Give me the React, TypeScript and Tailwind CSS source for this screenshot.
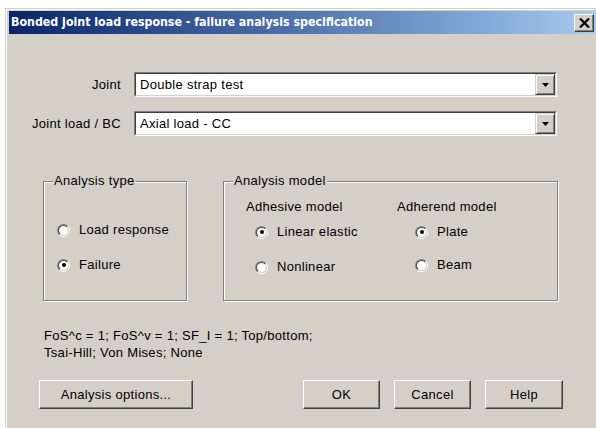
import React from 'react';

const FACE = 'bg-[#d4d0c8]';

// classic sunken radio circle
const Radio: React.FC<{ checked?: boolean }> = ({ checked }) => (
  <span className="relative inline-block w-[13px] h-[13px] rounded-full border border-t-[#808080] border-l-[#808080] border-b-white border-r-white shrink-0">
    <span className="absolute inset-0 rounded-full border border-t-[#404040] border-l-[#404040] border-b-[#d4d0c8] border-r-[#d4d0c8] bg-white flex items-center justify-center">
      {checked && <span className="w-[4px] h-[4px] rounded-full bg-black" />}
    </span>
  </span>
);

const RadioRow: React.FC<{ label: string; checked?: boolean }> = ({ label, checked }) => (
  <div className="flex items-center h-[16px] gap-[9px] -ml-[1px]">
    <Radio checked={checked} />
    <span>{label}</span>
  </div>
);

const Combo: React.FC<{ value: string }> = ({ value }) => (
  <div className="w-[423px] h-[25px] border border-t-[#808080] border-l-[#808080] border-b-white border-r-white">
    <div className="h-full border border-t-[#404040] border-l-[#404040] border-b-[#d4d0c8] border-r-[#d4d0c8] bg-white flex items-center">
      <span className="flex-1 pl-[4px]">{value}</span>
      <div className={`w-[20px] h-full ${FACE} border border-t-[#d4d0c8] border-l-[#d4d0c8] border-b-[#404040] border-r-[#404040] shadow-[inset_1px_1px_0_#fff,inset_-1px_-1px_0_#808080] flex items-center justify-center`}>
        <svg width="7" height="4" viewBox="0 0 7 4">
          <path d="M0 0h7L3.5 4z" fill="#000" />
        </svg>
      </div>
    </div>
  </div>
);

const GroupBox: React.FC<{ title: string; className: string; children: React.ReactNode }> = ({ title, className, children }) => (
  <div className={`relative h-[120px] border border-[#808080] shadow-[inset_1px_1px_0_#fff,1px_1px_0_#fff] ${className}`}>
    <span className={`absolute left-[9px] -top-[9px] px-[1px] leading-[16px] ${FACE}`}>{title}</span>
    {children}
  </div>
);

const Button: React.FC<{ className: string; children: React.ReactNode }> = ({ className, children }) => (
  <button
    className={`h-[29px] ${FACE} border border-t-white border-l-white border-b-[#404040] border-r-[#404040] shadow-[inset_-1px_-1px_0_#808080] flex items-center justify-center ${className}`}
  >
    {children}
  </button>
);

export default function App() {
  return (
    <div className="w-[596px] h-[428px] overflow-hidden bg-white pl-[5px] pt-[8px] font-['Liberation_Sans',Arial,sans-serif] text-[13px] tracking-[0.3px] text-black">
      <div className={`w-[591px] h-[430px] ${FACE} border-t border-l border-[#d4d0c8] shadow-[inset_1px_1px_0_#fff] pt-[2px] pl-[3px]`}>
        {/* title bar */}
        <div className="h-[23px] flex items-center justify-between pl-[2px] pr-[2px] bg-gradient-to-r from-[#0a246a] to-[#a6caf0]">
          <span className="text-white font-bold font-['DejaVu_Sans_Condensed','DejaVu_Sans',sans-serif] text-[12.3px] tracking-normal">
            Bonded joint load response - failure analysis specification
          </span>
          <div className={`w-[20px] h-[18px] ${FACE} border border-t-white border-l-white border-b-[#404040] border-r-[#404040] shadow-[inset_-1px_-1px_0_#808080] flex items-center justify-center`}>
            <svg width="11" height="10" viewBox="0 0 11 10">
              <path d="M1 0.5L10 9.5M10 0.5L1 9.5" stroke="#000" strokeWidth="2.2" />
            </svg>
          </div>
        </div>

        {/* dialog body */}
        <div className="flex flex-col">
          <div className="flex items-center mt-[38px]">
            <span className="w-[112px] text-right">Joint</span>
            <div className="ml-[13px]">
              <Combo value="Double strap test" />
            </div>
          </div>
          <div className="flex items-center mt-[14px]">
            <span className="w-[112px] text-right">Joint load / BC</span>
            <div className="ml-[13px]">
              <Combo value="Axial load - CC" />
            </div>
          </div>

          <div className="flex mt-[45px] ml-[34px] gap-[36px]">
            <GroupBox title="Analysis type" className="w-[144px]">
              <div className="flex flex-col pt-[40px] pl-[14px] gap-[19px]">
                <RadioRow label="Load response" />
                <RadioRow label="Failure" checked />
              </div>
            </GroupBox>
            <GroupBox title="Analysis model" className="w-[335px]">
              <div className="flex pt-[17px] pl-[22px]">
                <div className="w-[151px] flex flex-col">
                  <span className="leading-[16px]">Adhesive model</span>
                  <div className="flex flex-col pl-[10px] mt-[9px] gap-[19px]">
                    <RadioRow label="Linear elastic" checked />
                    <RadioRow label="Nonlinear" />
                  </div>
                </div>
                <div className="flex flex-col">
                  <span className="leading-[16px]">Adherend model</span>
                  <div className="flex flex-col pl-[19px] mt-[9px] gap-[17px]">
                    <RadioRow label="Plate" checked />
                    <RadioRow label="Beam" />
                  </div>
                </div>
              </div>
            </GroupBox>
          </div>

          <div className="mt-[26px] ml-[35px] leading-[17px]">
            <div>FoS^c = 1; FoS^v = 1; SF_I = 1; Top/bottom;</div>
            <div>Tsai-Hill; Von Mises; None</div>
          </div>

          <div className="flex mt-[19px] ml-[30px]">
            <Button className="w-[154px]">Analysis options...</Button>
            <Button className="w-[77px] ml-[110px]">OK</Button>
            <Button className="w-[77px] ml-[14px]">Cancel</Button>
            <Button className="w-[78px] ml-[14px]">Help</Button>
          </div>
        </div>
      </div>
    </div>
  );
}
